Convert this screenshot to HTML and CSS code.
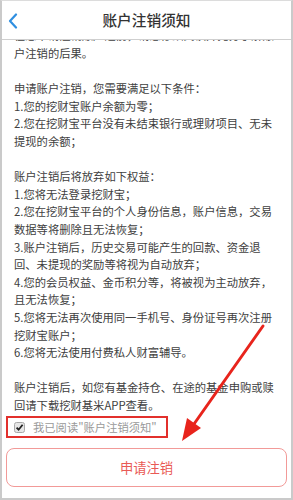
FILE: index.html
```html
<!DOCTYPE html>
<html lang="zh-CN">
<head>
<meta charset="utf-8">
<link rel="stylesheet" href="styles.css">
</head>
<body>
<div class="frame">
  <header class="bar">
    <svg class="back" width="10" height="16" viewBox="0 0 10 16"><path d="M8 1.5 L2 8 L8 14.5" fill="none" stroke="#2f8fe0" stroke-width="2.2" stroke-linecap="round" stroke-linejoin="round"/></svg>
    <h1 class="title">账户注销须知</h1>
  </header>
  <main class="content">
    <div class="scroll">
      <p>在您申请注销账户之前，请您仔细阅读并充分了解账户注销的后果。</p>
      <p>申请账户注销，您需要满足以下条件：<br>1.您的挖财宝账户余额为零；<br>2.您在挖财宝平台没有未结束银行或理财项目、无未提现的余额；</p>
      <p>账户注销后将放弃如下权益：<br>1.您将无法登录挖财宝；<br>2.您在挖财宝平台的个人身份信息，账户信息，交易数据等将删除且无法恢复；<br>3.账户注销后，历史交易可能产生的回款、资金退回、未提现的奖励等将视为自动放弃；<br>4.您的会员权益、金币积分等，将被视为主动放弃，且无法恢复；<br>5.您将无法再次使用同一手机号、身份证号再次注册挖财宝账户；<br>6.您将无法使用付费私人财富辅导。</p>
      <p>账户注销后，如您有基金持仓、在途的基金申购或赎回请下载挖财基米APP查看。</p>
    </div>
  </main>
  <div class="agree">
    <span class="check"><svg width="11" height="11" viewBox="0 0 11 11"><rect x="0.5" y="0.5" width="10" height="10" rx="2" fill="#e6e6e6" stroke="#a8a8a8"/><path d="M2.6 5.6 L4.6 7.7 L8.6 2.8" fill="none" stroke="#222" stroke-width="1.8"/></svg></span>
    <span class="agree-text">我已阅读"账户注销须知"</span>
  </div>
  <button class="apply">申请注销</button>
  <svg class="arrow" width="293" height="500" viewBox="0 0 293 500"><line x1="263" y1="326" x2="194" y2="424" stroke="#e8241c" stroke-width="3" stroke-linecap="round"/><polygon points="182,441 187,418 201,428" fill="#e8241c"/></svg>
</div>
</body>
</html>
```
FILE: styles.css
```css
* { box-sizing: border-box; }
html, body { margin: 0; padding: 0; }
body {
  width: 293px;
  height: 500px;
  font-family: "Noto Sans CJK SC", "Noto Sans", sans-serif;
  background: #fff;
}
.frame {
  position: relative;
  width: 293px;
  height: 500px;
  border: 2px solid #cacaca;
  border-top: 1px solid #dcdcdc;
  display: flex;
  flex-direction: column;
  overflow: hidden;
}
.bar {
  height: 39px;
  flex: none;
  display: flex;
  align-items: center;
  justify-content: center;
  border-bottom: 1px solid #cfcfcf;
  position: relative;
}
.back {
  position: absolute;
  left: 6px;
  top: 12px;
}
.title {
  margin: 0;
  font-size: 14.7px;
  font-weight: 500;
  color: #333;
  line-height: 20px;
}
.content {
  flex: none;
  height: 375px;
  overflow: hidden;
  padding: 0 13px 0 12px;
}
.scroll {
  margin-top: -12.6px;
  width: 264px;
}
.scroll p {
  margin: 0 0 17.6px;
  font-size: 11.3px;
  line-height: 17.6px;
  color: #404040;
}
.agree {
  align-self: flex-start;
  margin: 1px 0 0 4px;
  width: 162px;
  height: 22px;
  border: 2px solid #e2302c;
  display: flex;
  align-items: center;
  padding-left: 6px;
  gap: 8px;
}
.check { display: flex; }
.agree-text {
  font-size: 11.3px;
  color: #9a9a9a;
  line-height: 14px;
}
.apply {
  margin: 10px 4px 0 4px;
  height: 39px;
  border: 1.5px solid #f29a98;
  border-radius: 8px;
  background: #fff;
  color: #e95a55;
  font-family: "Noto Sans CJK SC", sans-serif;
  font-size: 13.3px;
  padding: 0;
}
.arrow {
  position: absolute;
  left: -2px;
  top: -1px;
  pointer-events: none;
}
```
